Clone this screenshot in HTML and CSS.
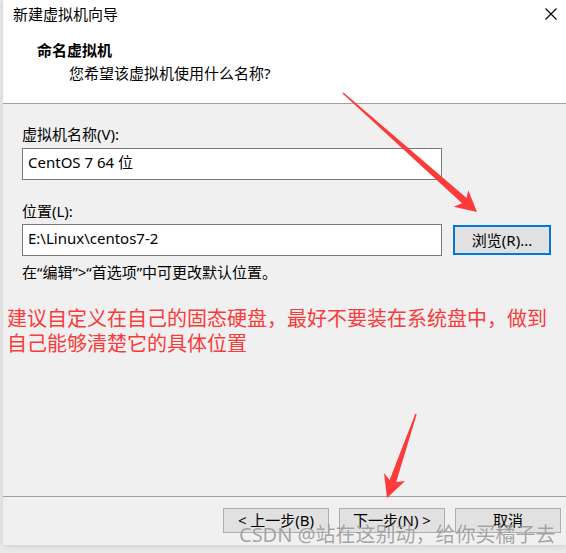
FILE: index.html
```html
<!DOCTYPE html>
<html lang="zh-CN">
<head>
<meta charset="utf-8">
<title>新建虚拟机向导</title>
<link rel="stylesheet" href="styles.css">
</head>
<body>
<div class="window">
  <div class="header">
    <div class="titlebar">
      <span class="title">新建虚拟机向导</span>
      <svg class="close" width="12" height="12" viewBox="0 0 12 12"><path d="M0.5 0.5 L11.5 11.5 M11.5 0.5 L0.5 11.5" stroke="#000" stroke-width="1.1" fill="none"/></svg>
    </div>
    <div class="h1">命名虚拟机</div>
    <div class="sub">您希望该虚拟机使用什么名称?</div>
  </div>
  <div class="content">
    <div class="label label-first">虚拟机名称(V):</div>
    <div class="field">CentOS 7 64 位</div>
    <div class="label label-second">位置(L):</div>
    <div class="row">
      <div class="field">E:\Linux\centos7-2</div>
      <div class="btn btn-browse">浏览(R)...</div>
    </div>
    <div class="hint">在“编辑”&gt;“首选项”中可更改默认位置。</div>
    <div class="note">建议自定义在自己的固态硬盘，最好不要装在系统盘中，做到<br>自己能够清楚它的具体位置</div>
  </div>
  <div class="footer">
    <div class="btn">&lt; 上一步(B)</div>
    <div class="btn">下一步(N) &gt;</div>
    <div class="btn">取消</div>
  </div>
</div>
<svg class="arrows" width="566" height="553" viewBox="0 0 566 553">
  <polygon fill="#fd3b3b" points="342.5,93.5 462,203.3 453.7,206.7 477,212 468.3,190.3 466.6,198.1 343.5,92.5"/>
  <polygon fill="#fd3b3b" points="415.3,413.8 389.6,479.9 384,473 387,498 405,481 396.2,482.1 416.7,414.2"/>
</svg>
<div class="watermark">CSDN @站在这别动，给你买橘子去</div>
</body>
</html>
```
FILE: styles.css
```css
html, body {
  margin: 0;
  padding: 0;
}
body {
  width: 566px;
  height: 553px;
  overflow: hidden;
  background: #e9e9e9;
  position: relative;
  font-family: "Noto Sans", "Noto Sans CJK SC", sans-serif;
  font-size: 15px;
  color: #000;
}
.window {
  margin-left: 3px;
  width: 563px;
  height: 545px;
  display: flex;
  flex-direction: column;
  background: #f0f0f0;
  box-shadow: 0 1px 6px rgba(0,0,0,0.12);
}
.header {
  background: #fff;
  height: 103px;
  border-bottom: 1px solid #a0a0a0;
  flex: none;
}
.titlebar {
  height: 28px;
  display: flex;
  align-items: center;
  padding-left: 10px;
  padding-right: 9px;
}
.title {
  line-height: 28px;
}
.close {
  margin-left: auto;
  display: block;
}
.h1 {
  margin-top: 12px;
  padding-left: 34px;
  line-height: 20px;
  font-weight: bold;
}
.sub {
  margin-top: 3px;
  padding-left: 66px;
  line-height: 20px;
}
.content {
  flex: 1;
  padding-left: 19px;
}
.label {
  line-height: 20px;
}
.label-first {
  margin-top: 20px;
}
.label-second {
  margin-top: 21px;
}
.field {
  box-sizing: border-box;
  width: 420px;
  height: 32px;
  margin-top: 4px;
  padding: 3px 5px;
  line-height: 20px;
  background: #fff;
  border: 1px solid #7a7a7a;
  white-space: nowrap;
}
.row {
  display: flex;
  align-items: center;
  gap: 11px;
  margin-top: 3px;
}
.row .field {
  margin-top: 0;
}
.btn {
  box-sizing: border-box;
  width: 106px;
  height: 25px;
  background: #e1e1e1;
  border: 1px solid #adadad;
  line-height: 23px;
  text-align: center;
  white-space: nowrap;
}
.btn-browse {
  width: 98px;
  height: 30px;
  border: 2px solid #0078d7;
  line-height: 26px;
}
.hint {
  margin-top: 6px;
  line-height: 20px;
}
.note {
  margin-top: 24px;
  margin-left: -15px;
  font-size: 20px;
  line-height: 25px;
  color: #f83b3b;
  white-space: nowrap;
}
.footer {
  flex: none;
  border-top: 1px solid #a0a0a0;
  padding: 11px 5px 12px 0;
  display: flex;
  justify-content: flex-end;
  gap: 10px;
}
.arrows {
  position: absolute;
  left: 0;
  top: 0;
  pointer-events: none;
}
.watermark {
  position: absolute;
  left: 239px;
  top: 522px;
  font-size: 20px;
  line-height: 26px;
  color: rgba(105,105,105,0.6);
  text-shadow: 0 0 1px rgba(255,255,255,0.7);
  white-space: nowrap;
  pointer-events: none;
}
```
